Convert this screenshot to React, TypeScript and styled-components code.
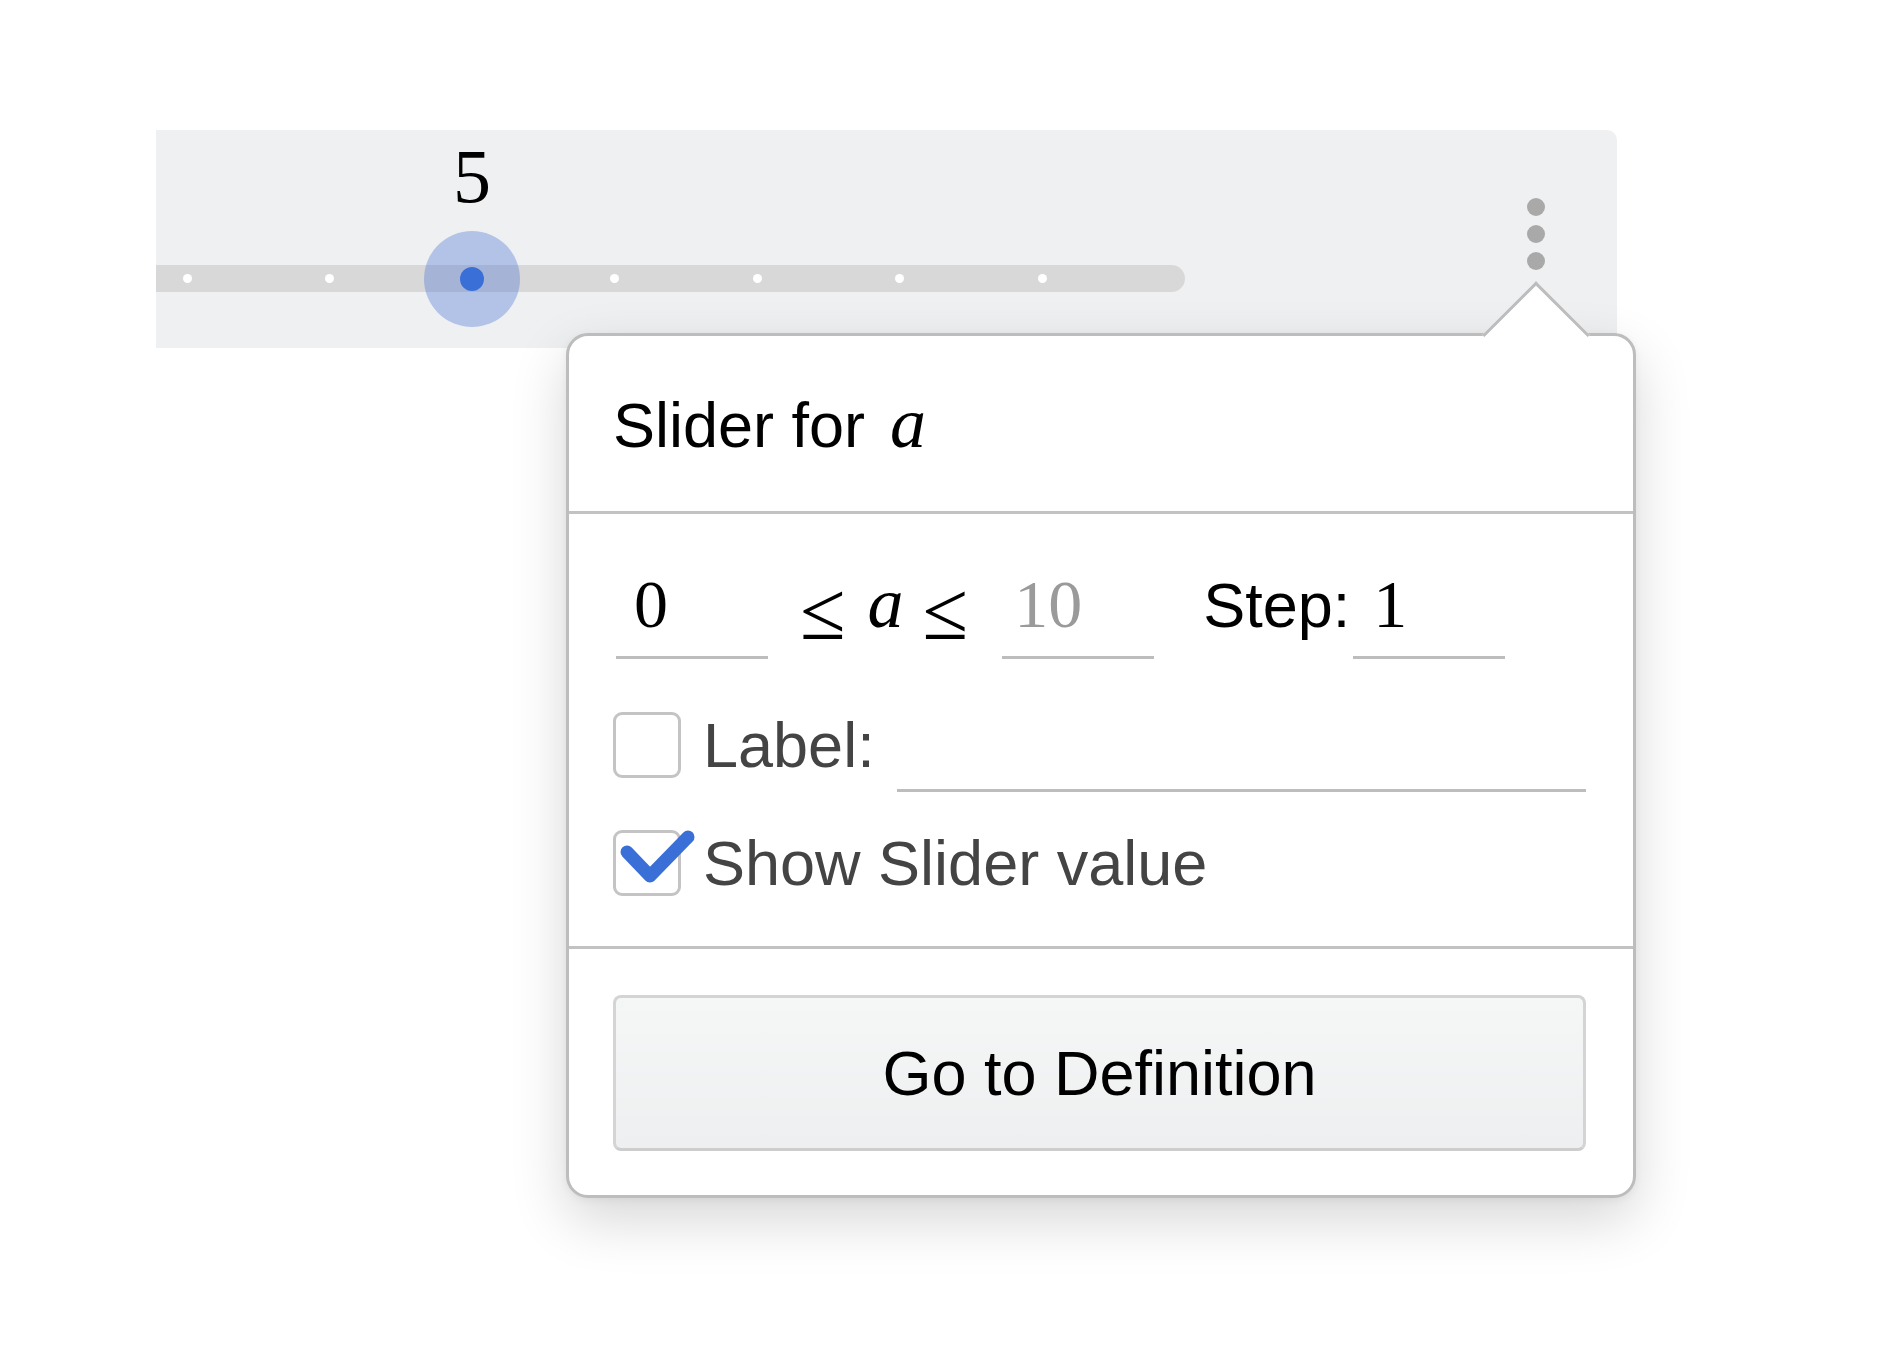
import React from "react";
import styled, { createGlobalStyle } from "styled-components";

const GlobalStyle = createGlobalStyle`
  html, body {
    margin: 0;
    padding: 0;
    background: #ffffff;
  }
  body {
    font-family: "Liberation Sans", Arial, Helvetica, sans-serif;
    -webkit-font-smoothing: antialiased;
  }
`;

const SANS = `"Liberation Sans", Arial, Helvetica, sans-serif`;
const SERIF = `"Liberation Serif", "Times New Roman", Times, serif`;

const Stage = styled.div`
  position: relative;
  width: 1884px;
  height: 1372px;
  box-sizing: border-box;
  padding: 130px 0 0 156px;
  overflow: hidden;
`;

/* ---------- slider expression panel ---------- */

const Panel = styled.div`
  display: flex;
  align-items: flex-start;
  width: 1461px;
  height: 218px;
  background: #eff0f2;
  border-radius: 0 10px 10px 0;
`;

const Track = styled.div`
  position: relative;
  flex: none;
  width: 1029px;
  height: 27px;
  margin-top: 135px;
  box-sizing: border-box;
  padding-left: 26.5px;
  display: flex;
  align-items: center;
  gap: 133.5px;
  background: #d8d8d8;
  border-radius: 0 14px 14px 0;
`;

const Tick = styled.span`
  flex: none;
  width: 9px;
  height: 9px;
  border-radius: 50%;
  background: #ffffff;
`;

const Thumb = styled.div`
  position: absolute;
  top: -34.5px;
  width: 96px;
  height: 96px;
  border-radius: 50%;
  background: rgba(68, 111, 213, 0.35);
  display: flex;
  align-items: center;
  justify-content: center;
`;

const ThumbCore = styled.span`
  width: 24px;
  height: 24px;
  border-radius: 50%;
  background: #3b6fd8;
`;

const ValueLabel = styled.span`
  position: absolute;
  left: 50%;
  bottom: calc(100% + 17px);
  transform: translateX(-50%);
  font-family: ${SERIF};
  font-size: 76px;
  line-height: 76px;
  color: #000;
`;

const Kebab = styled.button`
  flex: none;
  margin: 68px 72.5px 0 auto;
  padding: 0;
  border: 0;
  background: none;
  display: flex;
  flex-direction: column;
  gap: 9px;
  cursor: pointer;
`;

const KebabDot = styled.span`
  width: 18px;
  height: 18px;
  border-radius: 50%;
  background: #a9a9a9;
`;

/* ---------- popover ---------- */

const Popover = styled.div`
  position: absolute;
  left: 566px;
  top: 333px;
  width: 1070px;
  box-sizing: border-box;
  background: #ffffff;
  border: 3px solid #bdbdbd;
  border-radius: 22px;
  box-shadow: 0 22px 56px rgba(0, 0, 0, 0.16), 0 2px 8px rgba(0, 0, 0, 0.05);
`;

const Arrow = styled.span`
  position: absolute;
  left: 928.5px;
  top: -39px;
  width: 76px;
  height: 76px;
  box-sizing: border-box;
  background: #ffffff;
  border-top: 3px solid #bdbdbd;
  border-left: 3px solid #bdbdbd;
  transform: rotate(45deg);
`;

const Header = styled.div`
  height: 178px;
  box-sizing: border-box;
  padding: 52px 47px 0 44px;
  border-bottom: 3px solid #c2c2c2;
  font-family: ${SANS};
  font-size: 63px;
  line-height: 71px;
  color: #000;
  white-space: nowrap;
`;

const MathVar = styled.span<{ $size?: number }>`
  font-family: ${SERIF};
  font-style: italic;
  font-size: ${(p) => p.$size ?? 68}px;
`;

const TitleVar = styled(MathVar)`
  margin-left: 25px;
`;

const Body = styled.div`
  display: flex;
  flex-direction: column;
  padding: 53px 47px 47px 44px;
  border-bottom: 3px solid #c2c2c2;
`;

const RangeRow = styled.div`
  display: flex;
  align-items: baseline;
`;

const Field = styled.div<{ $muted?: boolean; $indent?: number }>`
  flex: none;
  width: 152px;
  box-sizing: border-box;
  padding: 0 0 14px ${(p) => p.$indent ?? 18}px;
  border-bottom: 3px solid #bdbdbd;
  font-family: ${SERIF};
  font-size: 68px;
  line-height: 75px;
  color: ${(p) => (p.$muted ? "#9a9a9a" : "#000")};
`;

const FirstField = styled(Field)`
  margin-left: 3px;
`;

const Relation = styled.div`
  flex: none;
  margin: 0 34px 0 32px;
  font-family: ${SERIF};
  font-size: 68px;
  line-height: 56px;
  color: #000;
  white-space: nowrap;
`;

const Leq = styled.span`
  font-size: 83px;
  vertical-align: -12px;
`;

const RelVar = styled(MathVar)`
  margin: 0 19px 0 22px;
`;

const StepLabel = styled.span`
  flex: none;
  margin: 0 3px 0 49px;
  font-family: ${SANS};
  font-size: 63px;
  line-height: 71px;
  color: #000;
`;

const OptionRow = styled.div<{ $gap: number }>`
  display: flex;
  align-items: flex-start;
  margin-top: ${(p) => p.$gap}px;
`;

const Checkbox = styled.span`
  position: relative;
  flex: none;
  width: 68px;
  height: 66px;
  box-sizing: border-box;
  border: 3px solid #c4c4c4;
  border-radius: 9px;
  background: #ffffff;
`;

const CheckMark = styled.svg`
  position: absolute;
  left: -3px;
  top: -3px;
  overflow: visible;
`;

const OptionText = styled.span`
  flex: none;
  margin: -2.5px 0 0 22px;
  font-family: ${SANS};
  font-size: 63px;
  line-height: 71px;
  color: #444444;
`;

const LabelInput = styled.span`
  flex: 1;
  margin-left: 22px;
  height: 80px;
  box-sizing: border-box;
  border-bottom: 3px solid #bdbdbd;
`;

const Footer = styled.div`
  padding: 46px 47px 44px 44px;
`;

const DefinitionButton = styled.button`
  display: block;
  width: 100%;
  height: 156px;
  box-sizing: border-box;
  border: 3px solid #d4d4d4;
  border-bottom-color: #cdcdcd;
  border-radius: 8px;
  background: linear-gradient(#f5f6f6, #eeeff0);
  font-family: ${SANS};
  font-size: 63px;
  color: #000;
  cursor: pointer;
`;

const TICKS = 7;
const TICK_START = 31;
const TICK_SPACING = 142.5;
const THUMB_RADIUS = 48;

export default function App() {
  const value = 5;
  const thumbTick = 2;
  const thumbLeft = TICK_START + TICK_SPACING * thumbTick - THUMB_RADIUS;

  return (
    <>
      <GlobalStyle />
      <Stage>
        <Panel>
          <Track>
            {Array.from({ length: TICKS }).map((_, i) => (
              <Tick key={i} />
            ))}
            <Thumb style={{ left: thumbLeft }}>
              <ValueLabel>{value}</ValueLabel>
              <ThumbCore />
            </Thumb>
          </Track>
          <Kebab aria-label="More options">
            <KebabDot />
            <KebabDot />
            <KebabDot />
          </Kebab>
        </Panel>

        <Popover>
          <Arrow />
          <Header>
            Slider for<TitleVar $size={72}>a</TitleVar>
          </Header>

          <Body>
            <RangeRow>
              <FirstField>0</FirstField>
              <Relation>
                <Leq>≤</Leq>
                <RelVar $size={72}>a</RelVar>
                <Leq>≤</Leq>
              </Relation>
              <Field $muted $indent={12}>
                10
              </Field>
              <StepLabel>Step:</StepLabel>
              <Field $indent={20}>1</Field>
            </RangeRow>

            <OptionRow $gap={53}>
              <Checkbox />
              <OptionText>Label:</OptionText>
              <LabelInput />
            </OptionRow>

            <OptionRow $gap={38}>
              <Checkbox>
                <CheckMark width="90" height="66" viewBox="0 0 90 66">
                  <polyline
                    points="14,22 37,46 75,7"
                    fill="none"
                    stroke="#3b6fd8"
                    strokeWidth="13"
                    strokeLinecap="round"
                    strokeLinejoin="round"
                  />
                </CheckMark>
              </Checkbox>
              <OptionText>Show Slider value</OptionText>
            </OptionRow>
          </Body>

          <Footer>
            <DefinitionButton>Go to Definition</DefinitionButton>
          </Footer>
        </Popover>
      </Stage>
    </>
  );
}
